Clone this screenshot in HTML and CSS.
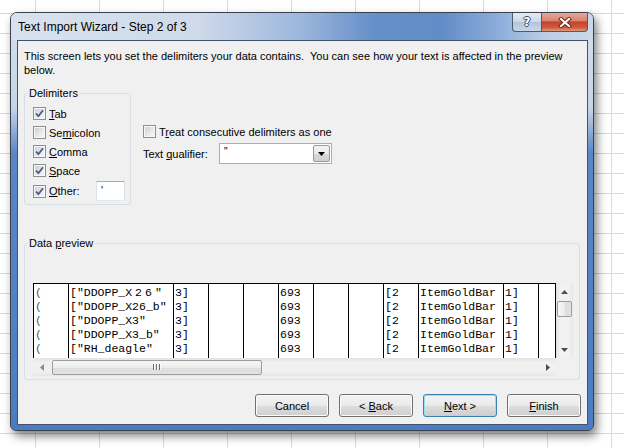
FILE: index.html
```html
<!DOCTYPE html>
<html>
<head>
<meta charset="utf-8">
<title>Text Import Wizard</title>
<link rel="stylesheet" href="styles.css">
</head>
<body>
<div class="desktop">
  <div class="window">
    <div class="titlebar">
      <span class="title">Text Import Wizard - Step 2 of 3</span>
      <div class="caption">
        <div class="cap help"><span>?</span></div>
        <div class="cap close">
          <svg width="14" height="11" viewBox="0 0 14 11"><path d="M3 2 L11 9 M11 2 L3 9" stroke="#6a2414" stroke-width="4" stroke-linecap="square" fill="none"/><path d="M3 2 L11 9 M11 2 L3 9" stroke="#ffffff" stroke-width="2.2" stroke-linecap="square" fill="none"/></svg>
        </div>
      </div>
    </div>
    <div class="client">
      <p class="intro">This screen lets you set the delimiters your data contains.&nbsp; You can see how your text is affected in the preview<br>below.</p>
      <div class="options">
        <fieldset class="group delims">
          <legend>Delimiters</legend>
          <div class="delim-list">
            <div class="cb-row"><span class="cb"><svg width="11" height="11" viewBox="0 0 11 11"><path d="M2 5.5 L4.4 8.2 L9 2.2" fill="none" stroke="#4a5a8a" stroke-width="1.8"/></svg></span><span><u>T</u>ab</span></div>
            <div class="cb-row"><span class="cb"></span><span>Se<u>m</u>icolon</span></div>
            <div class="cb-row"><span class="cb"><svg width="11" height="11" viewBox="0 0 11 11"><path d="M2 5.5 L4.4 8.2 L9 2.2" fill="none" stroke="#4a5a8a" stroke-width="1.8"/></svg></span><span><u>C</u>omma</span></div>
            <div class="cb-row"><span class="cb"><svg width="11" height="11" viewBox="0 0 11 11"><path d="M2 5.5 L4.4 8.2 L9 2.2" fill="none" stroke="#4a5a8a" stroke-width="1.8"/></svg></span><span><u>S</u>pace</span></div>
            <div class="cb-row other"><span class="cb"><svg width="11" height="11" viewBox="0 0 11 11"><path d="M2 5.5 L4.4 8.2 L9 2.2" fill="none" stroke="#4a5a8a" stroke-width="1.8"/></svg></span><span><u>O</u>ther:</span><span class="textbox">'</span></div>
          </div>
        </fieldset>
        <div class="side">
          <div class="cb-row"><span class="cb"></span><span>T<u>r</u>eat consecutive delimiters as one</span></div>
          <div class="qual-row">
            <span class="qual-label">Text <u>q</u>ualifier:</span>
            <div class="combo">
              <span class="combo-val">"</span>
              <span class="combo-btn"><svg width="7" height="4" viewBox="0 0 7 4"><path d="M0 0 H7 L3.5 4 Z" fill="#000"/></svg></span>
            </div>
          </div>
        </div>
      </div>
      <fieldset class="group preview">
        <legend>Data <u>p</u>review</legend>
        <div class="pv-wrap">
          <div class="pv">
            <div class="pv-grid">
              <div class="col w35 paren"><div>(</div><div>(</div><div>(</div><div>(</div><div>(</div></div>
              <div class="col w105"><div>["DDOPP_<span class="wide">X26</span>"</div><div>["DDOPP_X26_b"</div><div>["DDOPP_X3"</div><div>["DDOPP_X3_b"</div><div>["RH_deagle"</div></div>
              <div class="col w35"><div>3]</div><div>3]</div><div>3]</div><div>3]</div><div>3]</div></div>
              <div class="col w35"></div>
              <div class="col w35"></div>
              <div class="col w35"><div>693</div><div>693</div><div>693</div><div>693</div><div>693</div></div>
              <div class="col w35"></div>
              <div class="col w35"></div>
              <div class="col w35"><div>[2</div><div>[2</div><div>[2</div><div>[2</div><div>[2</div></div>
              <div class="col w85"><div>ItemGoldBar</div><div>ItemGoldBar</div><div>ItemGoldBar</div><div>ItemGoldBar</div><div>ItemGoldBar</div></div>
              <div class="col w35"><div>1]</div><div>1]</div><div>1]</div><div>1]</div><div>1]</div></div>
              <div class="col w17"></div>
            </div>
            <div class="vscroll">
              <span class="arrow"><svg width="7" height="4" viewBox="0 0 7 4"><path d="M0 4 H7 L3.5 0 Z" fill="#4d4d4d"/></svg></span>
              <span class="vthumb"></span>
              <span class="spacer"></span>
              <span class="arrow"><svg width="7" height="4" viewBox="0 0 7 4"><path d="M0 0 H7 L3.5 4 Z" fill="#4d4d4d"/></svg></span>
            </div>
            <div class="hscroll">
              <span class="arrow"><svg width="4" height="7" viewBox="0 0 4 7"><path d="M4 0 V7 L0 3.5 Z" fill="#8a8a8a"/></svg></span>
              <span class="hthumb"><span class="grip"></span><span class="grip"></span><span class="grip"></span></span>
              <span class="spacer"></span>
              <span class="arrow"><svg width="4" height="7" viewBox="0 0 4 7"><path d="M0 0 V7 L4 3.5 Z" fill="#4d4d4d"/></svg></span>
            </div>
            <div class="corner"></div>
          </div>
        </div>
      </fieldset>
      <div class="buttons">
        <div class="btn"><span>Cancel</span></div>
        <div class="btn"><span>&lt; <u>B</u>ack</span></div>
        <div class="btn default"><span><u>N</u>ext &gt;</span></div>
        <div class="btn"><span><u>F</u>inish</span></div>
      </div>
    </div>
  </div>
</div>
</body>
</html>
```
FILE: styles.css
```css
* { box-sizing: border-box; }
html, body { margin: 0; padding: 0; }
body {
  width: 624px;
  height: 448px;
  overflow: hidden;
  background-color: #ffffff;
  background-image:
    linear-gradient(90deg, #d9d9d9 1px, transparent 1px),
    linear-gradient(180deg, #d9d9d9 1px, transparent 1px);
  background-size: 64px 20px;
  background-position: 35px 13px;
  font-family: "Liberation Sans", Arial, sans-serif;
  font-size: 11px;
  color: #000;
}
.desktop { position: relative; width: 624px; height: 448px; }

.window {
  position: absolute;
  left: 10px;
  top: 12px;
  width: 584px;
  height: 419px;
  border: 1px solid #39414f;
  border-radius: 7px 7px 6px 6px;
  background: linear-gradient(180deg, #d5e0ed 0, #c6d4e7 95px, #5a86c6 140px, #4b7cc2 100%);
  box-shadow: 3px 5px 10px rgba(0, 0, 0, 0.5);
  display: flex;
  flex-direction: column;
}
.titlebar {
  height: 27px;
  flex: none;
  display: flex;
  border-radius: 6px 6px 0 0;
  background: linear-gradient(90deg, #d8e2ee 0%, #cfdaea 32%, #9cb6dc 50%, #6690c9 62%, #628cc7 74%, #8eaedb 84%, #bccde5 92%, #cad8ea 100%);
}
.title {
  padding: 7px 0 0 7px;
  line-height: 14px;
  font-size: 12px;
}
.caption { margin-left: auto; margin-right: 5px; display: flex; align-self: flex-start; }
.cap {
  height: 19px;
  border: 1px solid #4d5b70;
  border-top: none;
  display: flex;
  align-items: center;
  justify-content: center;
}
.help {
  width: 29px;
  border-right: none;
  border-radius: 0 0 0 4px;
  background: linear-gradient(180deg, #e4eaf2 0%, #ccd8e7 48%, #b3c4db 52%, #c9d6e8 100%);
}
.help span {
  font-family: "DejaVu Sans", sans-serif;
  font-weight: bold;
  font-size: 12px;
  color: #fff;
  text-shadow: 1px 0 0 #3d4b60, -1px 0 0 #3d4b60, 0 1px 0 #3d4b60, 0 -1px 0 #3d4b60;
}
.close {
  width: 47px;
  border-radius: 0 0 4px 0;
  background: linear-gradient(180deg, #e8a898 0%, #d98570 42%, #c5432b 50%, #cd5a3f 80%, #e09a7e 100%);
}

.client {
  flex: 1;
  margin: 0 5px 5px 6px;
  border: 1px solid #44536b;
  background: #f0f0f0;
  padding: 8px 6px 0 6px;
  display: flex;
  flex-direction: column;
}
.intro { margin: 0; line-height: 14px; }

.options { display: flex; align-items: flex-start; margin-top: 9px; }
.group {
  margin: 0;
  padding: 0;
  border: 1px solid #d5dfe5;
  border-radius: 3px;
  min-width: 0;
}
.group legend { margin-left: 2px; padding: 0 2px; line-height: 14px; }
.delims { width: 107px; flex: none; }
.delim-list { padding: 4px 5px 2px 8px; }
.cb-row { height: 19px; display: flex; align-items: center; white-space: nowrap; }
.cb-row.other { height: 22px; }
.cb {
  width: 13px;
  height: 13px;
  flex: none;
  margin-right: 3px;
  border: 1px solid #8e8f8f;
  box-shadow: inset 0 0 0 1px #f7f7f7;
  background: linear-gradient(135deg, #c9cdd3 0%, #eeeff0 70%, #f6f6f6 100%);
  display: flex;
  align-items: center;
  justify-content: center;
}
.textbox {
  margin-left: auto;
  width: 29px;
  height: 20px;
  background: #fff;
  border: 1px solid;
  border-color: #abadb3 #dbdfe6 #e3e9ef #e2e3ea;
  padding-left: 4px;
  line-height: 17px;
}

.side { margin-left: 12px; margin-top: 36px; }
.qual-row { margin-top: 2px; display: flex; align-items: center; }
.qual-label { width: 76px; flex: none; }
.combo {
  width: 113px;
  height: 21px;
  border: 1px solid #abadb3;
  background: #fff;
  display: flex;
}
.combo-val { flex: 1; padding-left: 4px; line-height: 16px; font-size: 10px; }
.combo-btn {
  width: 17px;
  margin: 1px;
  border: 1px solid #9a9a9a;
  border-radius: 2px;
  background: linear-gradient(180deg, #f4f4f4 0%, #e9e9e9 50%, #d9d9d9 51%, #cfcfcf 100%);
  display: flex;
  align-items: center;
  justify-content: center;
}

.preview { width: 556px; margin-top: 31px; }
.pv-wrap { padding: 33px 5px 3px 8px; }
.pv {
  display: grid;
  grid-template-columns: 523px 17px;
  grid-template-rows: 75px 18px;
}
.pv-grid {
  display: flex;
  background: #fff;
  border-top: 1px solid #000;
  border-right: 1px solid #000;
  overflow: hidden;
  font-family: "Liberation Mono", monospace;
  font-size: 11.5px;
}
.col {
  flex: none;
  border-left: 1px solid #000;
  padding: 2px 0 0 1px;
  line-height: 14px;
  white-space: pre;
  overflow: hidden;
}
.w35 { width: 35px; }
.w105 { width: 105px; }
.w85 { width: 85px; }
.w17 { width: 17px; }
.wide { letter-spacing: 3px; }
.paren { color: #555; }

.vscroll {
  display: flex;
  flex-direction: column;
  background: linear-gradient(90deg, #e3e3e3 0%, #f2f2f2 25%, #f2f2f2 75%, #e7e7e7 100%);
}
.arrow {
  width: 17px;
  height: 17px;
  flex: none;
  display: flex;
  align-items: center;
  justify-content: center;
}
.spacer { flex: 1; }
.vthumb {
  margin: 1px 1px 0;
  height: 16px;
  border: 1px solid #9d9d9d;
  border-radius: 2px;
  background: linear-gradient(90deg, #f7f7f7 0%, #ececec 50%, #dcdcdc 51%, #e2e2e2 100%);
}
.hscroll {
  display: flex;
  align-items: center;
  background: linear-gradient(180deg, #e3e3e3 0%, #f0f0f0 25%, #f0f0f0 75%, #e6e6e6 100%);
}
.hscroll .arrow { height: 18px; }
.hthumb {
  margin-left: 2px;
  width: 210px;
  height: 15px;
  border: 1px solid #9d9d9d;
  border-radius: 2px;
  background: linear-gradient(180deg, #f7f7f7 0%, #ececec 50%, #dcdcdc 51%, #e2e2e2 100%);
  display: flex;
  align-items: center;
  justify-content: center;
  gap: 1px;
}
.grip { width: 1px; height: 6px; background: #6c6c6c; box-shadow: 1px 0 0 #fafafa; margin-right: 1px; }
.corner { background: #f0f0f0; }

.buttons {
  margin-top: 14px;
  display: flex;
  justify-content: flex-end;
  gap: 10px;
}
.btn {
  width: 74px;
  height: 23px;
  border: 1px solid #707070;
  border-radius: 3px;
  box-shadow: inset 0 0 0 1px #fbfbfb;
  background: linear-gradient(180deg, #f2f2f2 0%, #ebebeb 50%, #dddddd 51%, #cfcfcf 100%);
  display: flex;
  align-items: center;
  justify-content: center;
  line-height: 14px;
}
.btn.default {
  border-color: #3c7fb1;
  box-shadow: inset 0 0 0 1px #9fdcf5;
}
```
